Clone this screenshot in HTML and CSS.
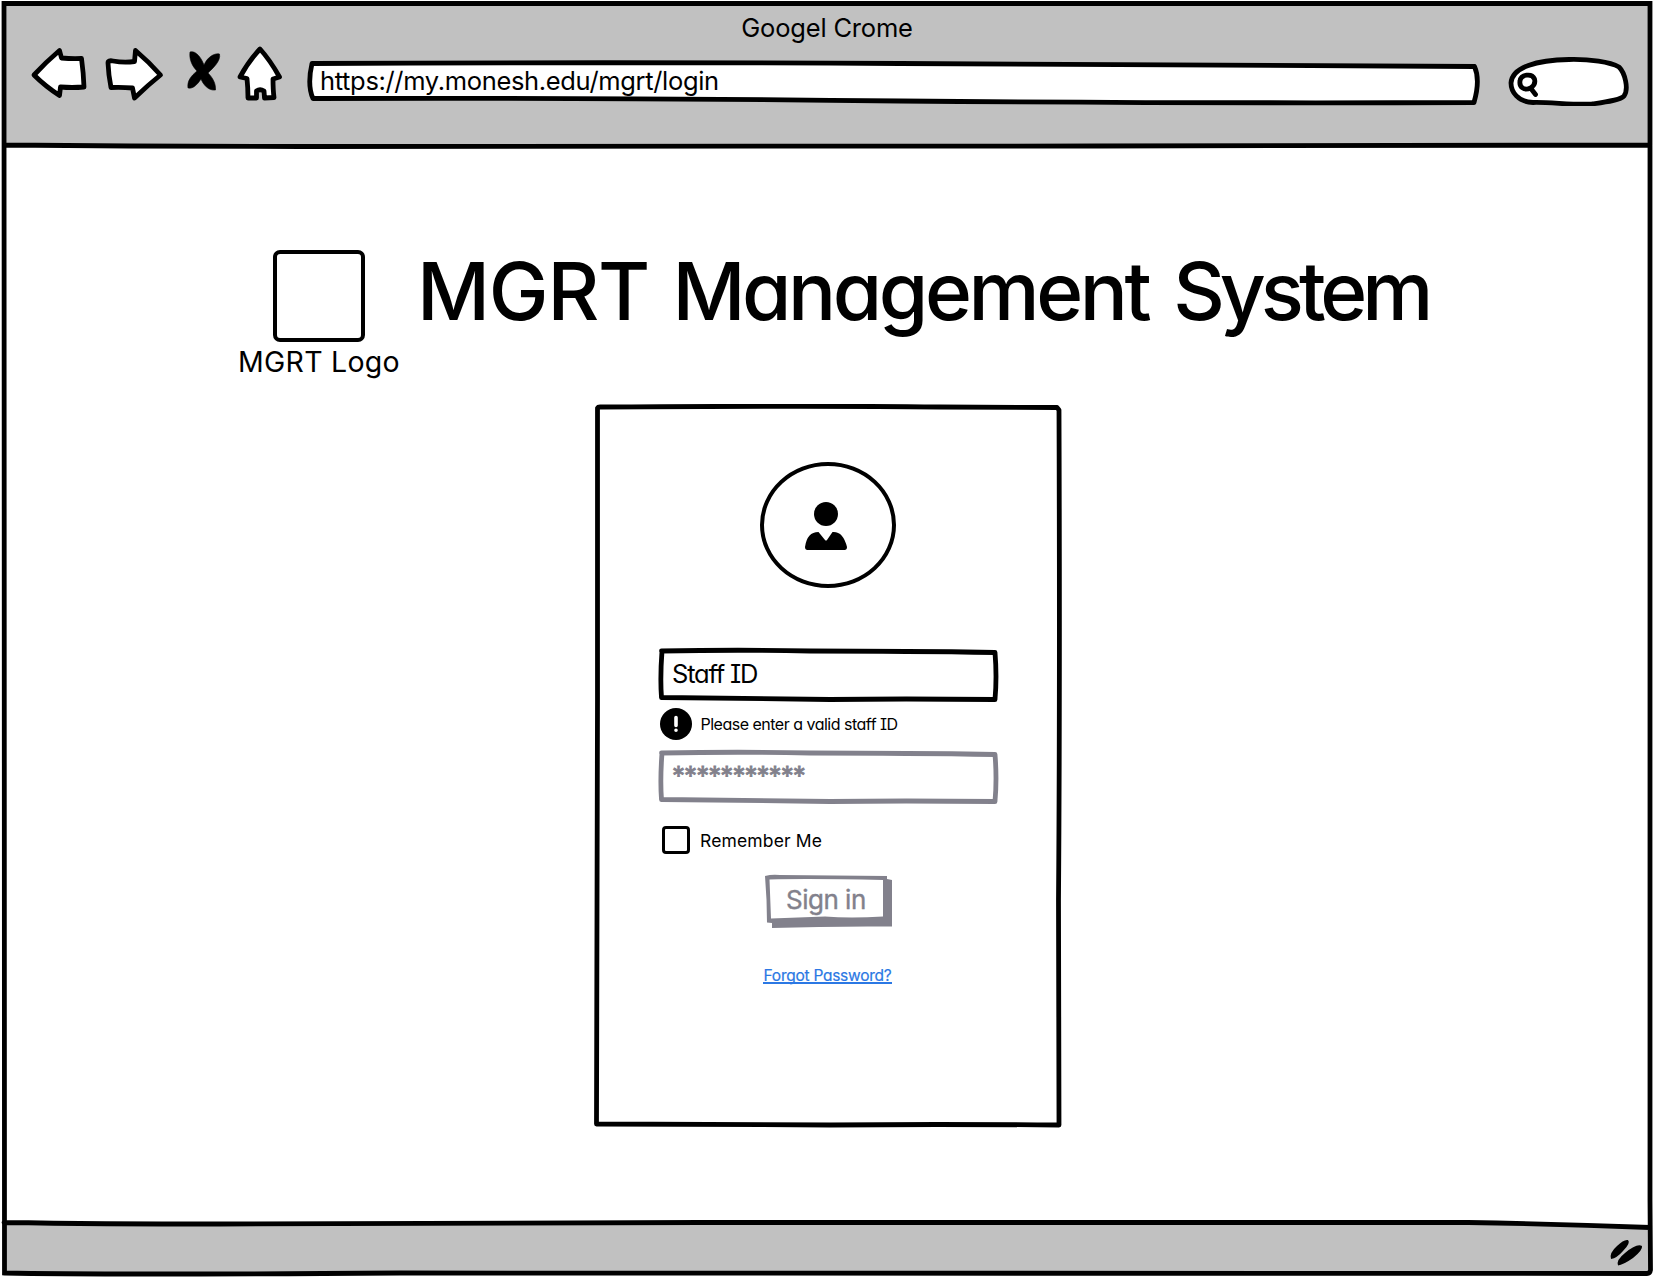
FILE: index.html
```html
<!DOCTYPE html>
<html lang="en">
<head>
<meta charset="utf-8">
<title>Googel Crome</title>
<link rel="stylesheet" href="styles.css">
</head>
<body>
<div class="window">
  <header class="chrome">
    <div class="chrome-title"><span>Googel Crome</span></div>
    <div class="toolbar">
      <svg class="tool outline" width="67" height="62" viewBox="30 44 67 62"><path d="M34 75 Q46 62 59.500 50.500 L61.500 58 Q72 59 81.500 58.500 Q83.500 73 84 87 Q72 88 60.500 87 L59.500 95.500 Q45 86 34 75Z"/></svg>
      <svg class="tool outline" width="78" height="62" viewBox="97 44 78 62"><path d="M108 63 Q108 60 113 61 Q124 63 134.500 61.500 L135.500 50.500 Q149 62 160.500 75 Q148 85 134.500 98 L132.500 88 Q122 87 111 87.500 Q108.500 75 108 63Z"/></svg>
      <svg class="tool cross" width="55" height="62" viewBox="175 44 55 62"><path d="M190 52 C196 50 202 59 204 65 C208 56 215 53 219.500 54 C221 61 213 68 208 73 C213 78 216 84 215.500 90 C208 91 203 84 201 79 C197 85 193 89 188 88 C187 81 191 76 197 71 C192 66 189 59 190 52Z"/></svg>
      <svg class="tool outline" width="70" height="62" viewBox="230 44 70 62"><path d="M260 49 Q270 60 279.500 77 L273 79 Q273 90 274 97.500 L264.500 98 L264 91 Q260 88.500 256.500 91 L256.500 98 L248 98 Q248 88 247 78.500 L240 77 Q248 62 260 49Z"/></svg>
      <div class="address">
        <svg class="sketch outline" viewBox="300 44 1190 62"><path d="M312 63.500 Q600 62 900 63.500 Q1200 65.500 1474.500 66.500 Q1480.500 80 1474 102.500 Q1200 103.500 900 101 Q600 97.500 313 98.500 Q307 85 312 63.500Z"/></svg>
        <span class="url">https://my.monesh.edu/mgrt/login</span>
      </div>
      <svg class="tool outline" width="150" height="62" viewBox="1490 44 150 62"><path d="M1533 102.500 C1518 102 1511 92 1511 83 C1512 67 1537 60 1569 59.500 C1590 59 1610 62 1619 67 C1625 73 1629 89 1624 96 C1621 100 1606 102 1592 104 C1573 105 1550 102 1533 102.500Z"/><path class="lens" d="M1530.500 88 C1524 91 1519 87 1520 81 C1521 74 1532 73 1534.500 79 Q1536 85 1530.500 88 L1535.500 94.500"/></svg>
    </div>
  </header>

  <main class="page">
    <div class="masthead">
      <div class="brand">
        <div class="logo"></div>
        <div class="logo-label"><span>MGRT Logo</span></div>
      </div>
      <h1 class="heading"><span class="word-a">MGRT</span> <span class="word-b">Management</span> <span class="word-c">System</span></h1>
    </div>

    <form class="card">
      <svg class="sketch outline clear" viewBox="594 404 468 724"><path d="M597.500 408 Q598 407 600 407 Q830 405.500 940 407 L1057 407.500 L1059 410 Q1060 700 1058.500 900 L1059 1125 Q930 1124 830 1125 Q700 1124.500 596.500 1124 Q597 900 597.500 700Z"/></svg>
      <div class="avatar">
        <svg width="44" height="50" viewBox="804 501 44 50"><circle cx="826" cy="514" r="12"/><path d="M818.500 532 L825 540 Q826 541 827 540 L832.500 532 Q843 531 847 547 Q847 550 844.500 550 H807.500 Q805 550 805 547 Q807 532 818.500 532Z"/></svg>
      </div>
      <div class="field">
        <svg class="sketch outline field-line" viewBox="656 646 344 58"><path d="M661.500 651 Q740 649.500 810 651 Q910 651 995 652.500 Q997 677 995 699.500 Q900 698.500 830 699.500 Q730 698.500 661.500 697.500 Q660 678 662 651Z"/></svg>
        <span class="field-text staff">Staff ID</span>
      </div>
      <div class="alert">
        <svg width="32" height="32" viewBox="0 0 32 32"><circle cx="16" cy="16" r="16"/><path class="bang" d="M16 9.500V17.500M16 22.200V22.300"/></svg>
        <span class="alert-text">Please enter a valid staff ID</span>
      </div>
      <div class="field disabled">
        <svg class="sketch outline field-line" viewBox="656 646 344 58"><path d="M661.500 651 Q740 649.500 810 651 Q910 651 995 652.500 Q997 677 995 699.500 Q900 698.500 830 699.500 Q730 698.500 661.500 697.500 Q660 678 662 651Z"/></svg>
        <span class="field-text password">***********</span>
      </div>
      <div class="remember">
        <span class="box"></span>
        <span class="remember-text">Remember Me</span>
      </div>
      <div class="signin">
        <svg class="sketch" viewBox="762 872 134 58"><path fill="#82818c" d="M765 876 Q772 874 780 875 L887 876 V879 L892 880 V926.500 Q830 926 772 928 V923 L767 922.500 Q767 900 765 876Z"/><path fill="#fff" d="M769.500 879.500 Q810 878.500 883 880 V916.500 Q850 918.500 825 916.500 L771 918.500Z"/></svg>
        <span class="signin-text">Sign in</span>
      </div>
      <a class="forgot"><span>Forgot Password?</span></a>
    </form>
  </main>

  <footer class="status">
    <svg width="34" height="28" viewBox="1609 1238 34 28"><path d="M1611 1259 Q1609 1253 1617 1246 Q1624 1239 1628 1240 Q1631 1243 1623 1251 Q1617 1258 1611 1259ZM1618 1265.500 Q1616 1260 1625 1253 Q1637 1243 1642 1246 Q1643 1250 1633 1258 Q1623 1265 1618 1265.500Z"/></svg>
  </footer>

  <svg class="sketch outline clear frame" viewBox="0 0 1654 1278"><path d="M4 3.500 H1650 Q1649 600 1650 1200 L1650.500 1270 Q1650 1273.500 1647 1273.500 L400 1273 Q100 1275 4.500 1273 Q4 600 4 3.500ZM4 145 Q150 146.500 300 146.500 L1100 146 Q1400 145 1650 145M4 1222.500 Q100 1224 220 1224 L700 1222.500 H1468 Q1560 1224 1650 1227.500"/></svg>
</div>
</body>
</html>
```
FILE: styles.css
```css
* { box-sizing: border-box; }

body {
  margin: 0;
  background: #fff;
  color: #000;
  font-family: Inter, "Liberation Sans", sans-serif;
  font-feature-settings: "cv11", "cv08";
  font-weight: 400;
}

svg { display: block; flex: none; }
span { white-space: nowrap; }

.window {
  position: relative;
  width: 1654px;
  height: 1278px;
  padding: 3px 4px 4px;
  display: flex;
  flex-direction: column;
}

/* Hand-drawn outlines laid over the boxes they belong to */
.sketch {
  position: absolute;
  inset: 0;
  width: 100%;
  height: 100%;
}
.outline { fill: #fff; stroke: #000; stroke-width: 4.800; stroke-linejoin: round; stroke-linecap: round; }
.clear { fill: none; }
.frame { stroke-linejoin: miter; pointer-events: none; }
.cross { stroke: #000; stroke-width: 0.600; }

.chrome { height: 143px; background: #c1c1c1; padding-top: 8px; }
.chrome-title {
  height: 33px;
  line-height: 33px;
  font-size: 25.500px;
  text-align: center;
  letter-spacing: -0.180px;
}
.toolbar { display: flex; height: 62px; padding-left: 26px; }
.address { position: relative; flex: none; width: 1190px; padding: 20px 0 0 20px; }
.url { position: relative; display: block; font-size: 25.500px; line-height: 34px; letter-spacing: -0.340px; }
.lens { stroke-width: 4.800; fill: none; }

.page { flex: 1; padding-top: 104px; }
.masthead { display: flex; height: 154px; padding-left: 235px; }
.brand { width: 160px; display: flex; flex-direction: column; align-items: center; }
.logo { width: 92px; height: 92px; border: 4px solid #000; border-radius: 7px; }
.logo-label { font-size: 28.500px; line-height: 36px; margin-top: 2px; letter-spacing: 0.250px; }
.heading {
  margin: 1px 0 0 18px;
  font-size: 80px;
  line-height: 80px;
  font-weight: 500;
  white-space: nowrap;
}
.word-a { letter-spacing: -1.200px; margin-right: 2px; }
.word-b { letter-spacing: -3.400px; margin-right: 3.400px; }
.word-c { letter-spacing: -5px; }

.card {
  position: relative;
  width: 468px;
  height: 724px;
  margin-left: 590px;
  padding: 58px 62px 0;
}
.avatar {
  position: relative;
  width: 136px;
  height: 126px;
  margin-left: 104px;
  border: 4px solid #000;
  border-radius: 50%;
  padding: 35px 0 0 40px;
}
.field { position: relative; height: 58px; margin-top: 58px; padding: 10px 0 0 16px; }
.field-line { stroke-width: 4.800; }
.field-text { position: relative; display: block; font-size: 26px; line-height: 36px; }
.staff { font-size: 25.500px; letter-spacing: -1.200px; }
.alert { display: flex; align-items: center; height: 32px; margin: 4px 0 0 4px; }
.alert-text { margin-left: 8.500px; font-size: 16px; letter-spacing: -0.500px; }
.bang { stroke: #fff; stroke-width: 3.600; stroke-linecap: round; }
.disabled { margin-top: 8px; color: #82818c; }
.disabled .outline { stroke: #82818c; }
.password { letter-spacing: -0.950px; -webkit-text-stroke: 0.800px #82818c; }
.remember { display: flex; align-items: center; height: 28px; margin: 20px 0 0 6px; }
.box { width: 28px; height: 28px; border: 3px solid #000; border-radius: 4px; }
.remember-text { margin-left: 10px; font-size: 17.500px; letter-spacing: 0.150px; }
.signin { position: relative; width: 134px; height: 58px; margin: 18px 0 0 106px; padding: 10px 0 0 24px; color: #82818c; }
.signin-text { position: relative; display: block; font-size: 26px; line-height: 36px; letter-spacing: -0.500px; -webkit-text-stroke: 0.400px #82818c; }
.forgot {
  display: block;
  width: 129px;
  height: 21px;
  margin: 33px 0 0 107px;
  border-bottom: 2px solid #2b78e4;
  color: #2b78e4;
  font-size: 15.500px;
  line-height: 25px;
  text-align: center;
  letter-spacing: -0.260px;
  -webkit-text-stroke: 0.200px #2b78e4;
}

.status { height: 49px; background: #c1c1c1; padding: 13px 7px 0; display: flex; justify-content: flex-end; }
```
